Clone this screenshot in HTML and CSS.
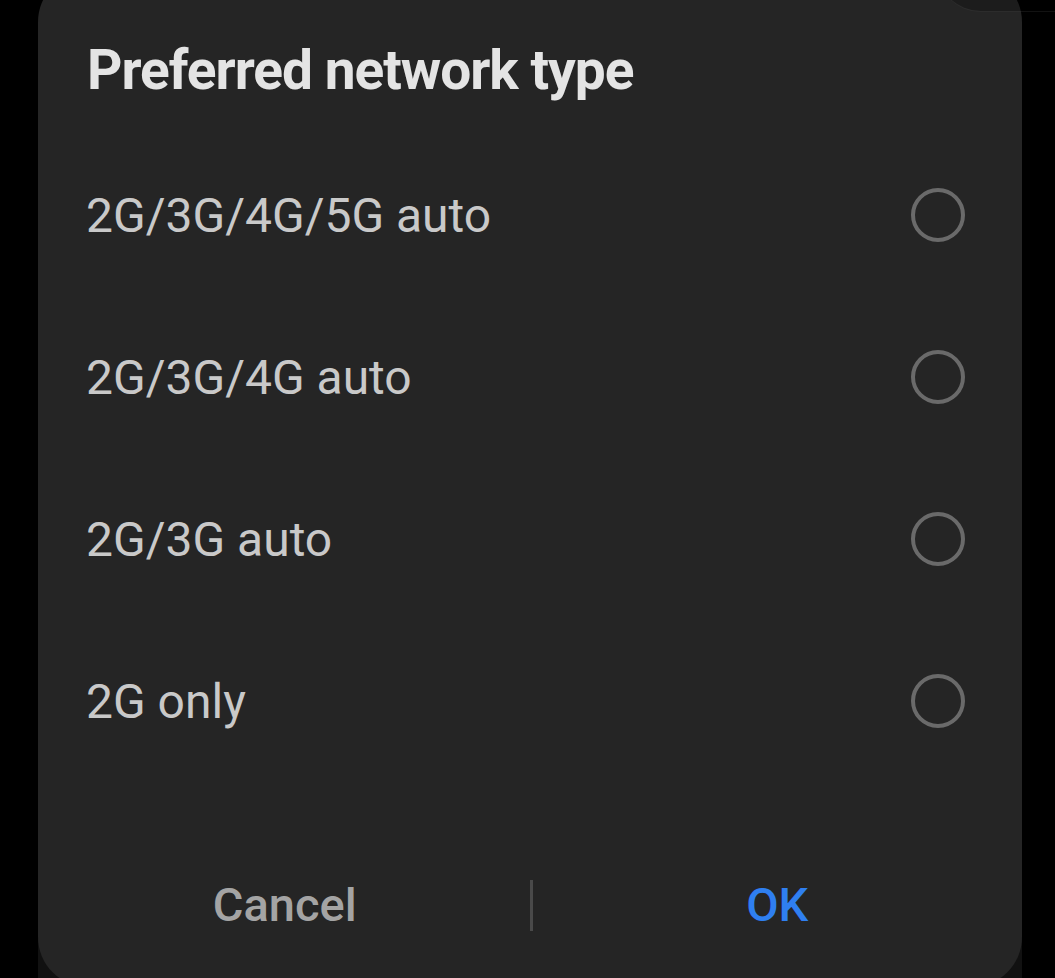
FILE: index.html
```html
<!DOCTYPE html>
<html>
<head>
<meta name="viewport" content="width=device-width, initial-scale=1">
<title>Preferred network type</title>
<link rel="stylesheet" href="styles.css">
</head>
<body>

<div class="nav-strip"></div>

<div class="dialog">
  <div class="dialog-title">Preferred network type</div>

  <div class="option-list">
    <div class="option"><span>2G/3G/4G/5G auto</span><i class="radio"></i></div>
    <div class="option"><span>2G/3G/4G auto</span><i class="radio"></i></div>
    <div class="option"><span>2G/3G auto</span><i class="radio"></i></div>
    <div class="option"><span>2G only</span><i class="radio"></i></div>
  </div>

  <div class="dialog-buttons">
    <button type="button" class="btn cancel">Cancel</button>
    <span class="divider"></span>
    <button type="button" class="btn ok">OK</button>
  </div>
</div>

<div class="top-panel"></div>

</body>
</html>
```

FILE: styles.css
```css
* {box-sizing: border-box;}

body {
  margin: 0;
  background: #000;
  font-family: Roboto, "Liberation Sans", Arial, sans-serif;
  overflow: hidden;
  height: 978px;
  position: relative;
}

/* dark bar behind the bottom corners of the dialog */
.nav-strip {
  position: absolute;
  left: 38px;
  bottom: 0;
  width: 984px;
  height: 100px;
  background: #111;
}

/* the panel peeking over the top right */
.top-panel {
  position: absolute;
  left: 937px;
  top: -100px;
  width: 160px;
  height: 112px;
  background: rgba(0, 0, 0, 0.22);
  border-bottom: 1px solid rgba(255, 255, 255, 0.07);
  border-bottom-left-radius: 44px;
}

.dialog {
  position: relative;
  margin: -28px 0 0 38px;
  width: 984px;
  background: #252525;
  border-radius: 50px;
  padding: 66px 57px 37px 48px;
}

.dialog-title {
  font-size: 55px;
  line-height: 64px;
  font-weight: 700;
  color: #e4e4e4;
  letter-spacing: -1px;
  padding-left: 1px;
}

.option-list {
  margin-top: 32px;
}

.option {
  height: 162px;
  display: flex;
  align-items: center;
  justify-content: space-between;
  font-size: 48px;
  line-height: 56px;
  color: #c9c9c9;
  padding-top: 2px;
}

.radio {
  width: 54px;
  height: 54px;
  border: 4px solid #6a6a6a;
  border-radius: 50%;
  margin-top: -2px;
}

.dialog-buttons {
  margin: 78px -57px 0 -48px;
  height: 90px;
  display: flex;
  align-items: center;
}

.btn {
  flex: 1;
  background: none;
  border: none;
  padding: 0;
  font-family: inherit;
  font-size: 47px;
  line-height: 56px;
  font-weight: 500;
  cursor: pointer;
}

.cancel {
  color: #a4a4a4;
  padding-left: 2px;
}

.ok {
  color: #2f7ff0;
}

.divider {
  width: 3px;
  height: 51px;
  background: #4a4a4a;
}
```
